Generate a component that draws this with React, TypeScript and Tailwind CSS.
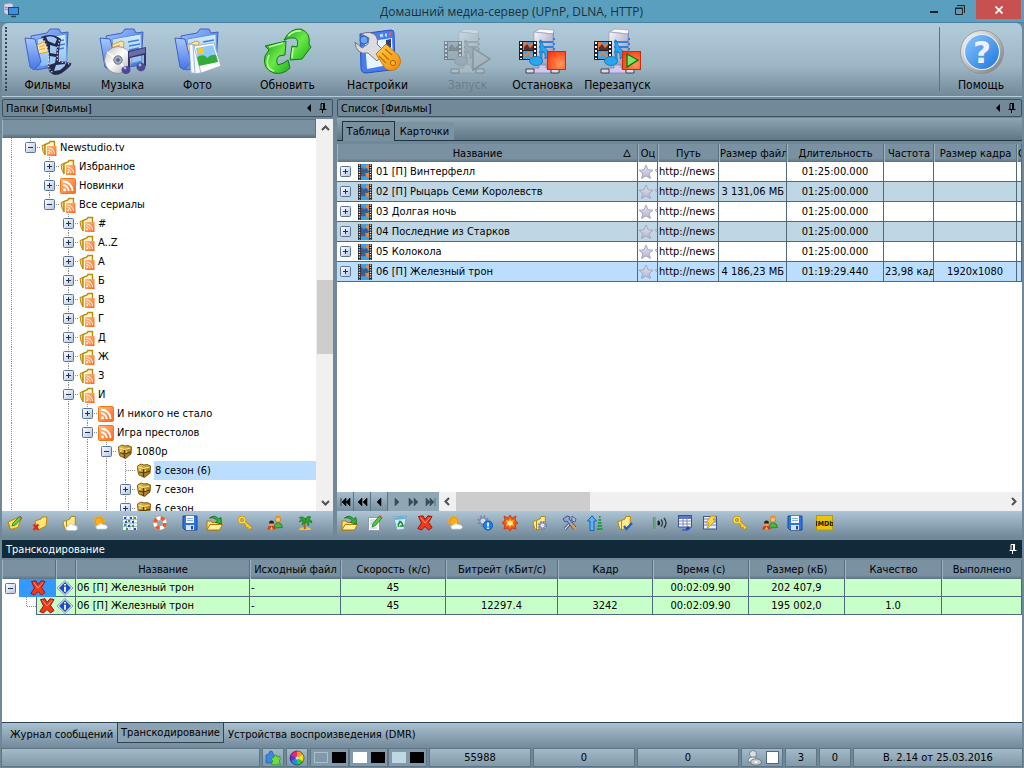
import React from 'react';

type IconProps = { className?: string };

const tahoma = "font-['DejaVu_Sans_Condensed','DejaVu_Sans',sans-serif]";

/* ---------- shared gradients ---------- */

const Defs = () => (
  <svg width="0" height="0" className="absolute" aria-hidden="true">
    <defs>
      <linearGradient id="folderBlue" x1="0" y1="0" x2="1" y2="1">
        <stop offset="0" stopColor="#9fc0ff" />
        <stop offset="1" stopColor="#3c6ae0" />
      </linearGradient>
      <linearGradient id="flapBlue" x1="0" y1="0" x2="0" y2="1">
        <stop offset="0" stopColor="#a9c8ff" />
        <stop offset="1" stopColor="#4474e4" />
      </linearGradient>
      <linearGradient id="paperBlue" x1="0" y1="0" x2="0" y2="1">
        <stop offset="0" stopColor="#d3ecfc" />
        <stop offset="1" stopColor="#86b8f0" />
      </linearGradient>
      <linearGradient id="disc" x1="0" y1="0" x2="1" y2="1">
        <stop offset="0" stopColor="#b9b9b9" />
        <stop offset="0.45" stopColor="#ffffff" />
        <stop offset="1" stopColor="#a9a9a9" />
      </linearGradient>
      <linearGradient id="green" x1="0" y1="0" x2="1" y2="1">
        <stop offset="0" stopColor="#22a022" />
        <stop offset="0.5" stopColor="#6be848" />
        <stop offset="1" stopColor="#1cae1c" />
      </linearGradient>
      <linearGradient id="tower" x1="0" y1="0" x2="1" y2="1">
        <stop offset="0" stopColor="#f6f6fb" />
        <stop offset="1" stopColor="#8e8eb0" />
      </linearGradient>
      <radialGradient id="stopRed" cx="0.7" cy="0.7" r="0.8">
        <stop offset="0" stopColor="#ff9a5c" />
        <stop offset="1" stopColor="#ff3a12" />
      </radialGradient>
      <linearGradient id="orange" x1="0" y1="0" x2="1" y2="1">
        <stop offset="0" stopColor="#ffd04a" />
        <stop offset="1" stopColor="#f58a08" />
      </linearGradient>
      <linearGradient id="rssFill" x1="0" y1="0" x2="1" y2="1">
        <stop offset="0" stopColor="#ffc08a" />
        <stop offset="1" stopColor="#ff6418" />
      </linearGradient>
      <linearGradient id="helpBlue" x1="0" y1="0" x2="1" y2="1">
        <stop offset="0" stopColor="#8cc6ff" />
        <stop offset="1" stopColor="#1976dc" />
      </linearGradient>
      <linearGradient id="ring" x1="0" y1="0" x2="1" y2="1">
        <stop offset="0" stopColor="#ffffff" />
        <stop offset="1" stopColor="#777777" />
      </linearGradient>
      <linearGradient id="boxBlue" x1="0" y1="0" x2="1" y2="1">
        <stop offset="0" stopColor="#ffffff" />
        <stop offset="1" stopColor="#b4c4e0" />
      </linearGradient>
      <linearGradient id="starFill" x1="0" y1="0" x2="0" y2="1">
        <stop offset="0" stopColor="#e4e4ea" />
        <stop offset="1" stopColor="#b4b4dc" />
      </linearGradient>
      <linearGradient id="gold" x1="0" y1="0" x2="1" y2="1">
        <stop offset="0" stopColor="#f0cc50" />
        <stop offset="1" stopColor="#8a6010" />
      </linearGradient>
    </defs>
  </svg>
);

/* ---------- large toolbar icons, 48x48 ---------- */

const FolderBase = () => (
  <>
    <path d="M7 9 23 6 26 2h9l2 4 7-1-2 33-30 5Z" fill="url(#folderBlue)" stroke="#3d62c4" />
    <path d="M13 12 42 7l1 27-27 6Z" fill="url(#paperBlue)" stroke="#5f93dc" />
    <path d="M29 15l11-2M30 19l11-2M30 23l10-2" stroke="#3f83d8" strokeWidth="1.400" />
    <path d="M13 18l9-4 3 1-1 10-11 2Z" fill="#ffe3a0" stroke="#e0a030" />
    <path d="M15 20l6-2M15 23l6-2" stroke="#e8a83c" />
    <path d="M1 11 11 12 17 35 10 43 6 40Z" fill="url(#flapBlue)" stroke="#3d62c4" />
  </>
);

const FilmsIcon = () => (
  <svg width="48" height="48" viewBox="0 0 48 48">
    <FolderBase />
    <path d="M17 10q11-5 20 2-3 14-2 22l12 2q2 2-9 10-3 2-7 2-9-2-6-14 1-13-8-24Z" fill="#26284a" />
    <path d="M22 10q7-2 11 2l-2 5-7-3ZM26 18l7 2-1 7-6-1ZM26 29l6 1-1 6-6 2ZM32 38l9-1q2 1-5 6l-6 1Z" fill="#9cc8f2" />
    <path d="M18.500 11q7 9 6 24-1 7 5 11" fill="none" stroke="#d4dcf4" strokeWidth="1.200" strokeDasharray="1.400 1.800" />
    <path d="M35.500 13q-3 10-2 21l12 3" fill="none" stroke="#d4dcf4" strokeWidth="1.200" strokeDasharray="1.400 1.800" />
  </svg>
);

const MusicIcon = () => (
  <svg width="48" height="48" viewBox="0 0 48 48">
    <FolderBase />
    <circle cx="19" cy="33" r="13.500" fill="url(#disc)" stroke="#888" strokeWidth="0.800" />
    <path d="M19 33 8 25M19 33l9-10M19 33l8 10" stroke="#fff" strokeWidth="2" opacity="0.700" />
    <circle cx="19" cy="33" r="4.200" fill="#a4adb8" stroke="#6d7884" />
    <circle cx="19" cy="33" r="1.800" fill="#3f6898" />
    <path d="M29 24l18-4v19h-2V28l-14 3v12h-2Z" fill="#34346c" />
    <path d="M30 25l16-4v5l-16 4Z" fill="#6c6ca8" />
    <ellipse cx="27" cy="43" rx="4.500" ry="4" fill="#4a4a94" />
    <ellipse cx="42" cy="40" rx="4.500" ry="4.200" fill="#4a4a94" />
    <circle cx="26" cy="41" r="1.400" fill="#b4b4e4" />
    <circle cx="41" cy="38" r="1.400" fill="#b4b4e4" />
  </svg>
);

const PhotoIcon = () => (
  <svg width="48" height="48" viewBox="0 0 48 48">
    <FolderBase />
    <path d="M15 17l13 2-1 28-10-1Z" fill="#f4f8fe" stroke="#8aa4cc" strokeWidth="0.800" />
    <path d="M19 18l10 2 2 25-10 2Z" fill="#f4f8fe" stroke="#8aa4cc" strokeWidth="0.800" />
    <path d="M20 19l20-3 7 23-20 7Z" fill="#fff" stroke="#9ab" strokeWidth="0.800" />
    <path d="M22 21l17-3 5 16-19 4Z" fill="#8ecbfb" />
    <path d="M23 30q8-4 10 1 4-4 9-3l2 7-19 4Z" fill="#35ac38" />
    <circle cx="27" cy="24" r="3" fill="#ffcc10" />
  </svg>
);

const RefreshBig = () => (
  <svg width="48" height="48" viewBox="0 0 48 48">
    <path d="M20 13Q26 1 37 2q10 4 8 15l2 3-9 12-12 1 2-14 5 1q2-7-2-9-5-1-11 2Z" fill="url(#green)" stroke="#0b7d10" />
    <path d="M24 9q6-6 13-5M29 21l-1 10" stroke="#b8ff9c" strokeWidth="1.600" fill="none" />
    <path d="M1 19 22 14l-1 14-6 1q-4 4-1 9 5-1 10-5l2 8q-7 7-16 5Q-2 42 1 29l4-6Z" fill="url(#green)" stroke="#0b7d10" />
    <path d="M5 20l14-4M5 28q-5 13 5 16" stroke="#b8ff9c" strokeWidth="1.600" fill="none" />
  </svg>
);

const SettingsBig = () => (
  <svg width="48" height="48" viewBox="0 0 48 48">
    <path d="M6 7l31-4q3 0 3 3l1 33q0 3-4 4l-25 3q-5 0-5-5Z" fill="#477df0" stroke="#2b4fba" />
    <path d="M11 15l27-4 1 26-26 5Z" fill="#e8f4ff" />
    <path d="M26 9l3-1M31 8h2" stroke="#bcdcff" strokeWidth="3" />
    <path d="M35 7h2" stroke="#ff6040" strokeWidth="3" />
    <path d="M32 13l5-1v9l-5-3Z" fill="#28408c" />
    <path d="M7 7q10-4 15 2 3 5 1 8l8 8-8 9-9-8Q2 28 1 15l7 6 6-4 1-6Z" fill="#dcdce0" stroke="#75767e" />
    <circle cx="10" cy="13" r="4" fill="#6ba4f8" stroke="#2b5fc4" />
    <path d="M22 27 32 17 45 29q4 8-3 13-7 3-11-1Z" fill="url(#orange)" stroke="#c87800" />
    <path d="M28 26l7 7M25 29l7 7M31 22l7 6" stroke="#c07400" strokeWidth="1.400" />
    <circle cx="39" cy="36" r="2.600" fill="#ffb628" stroke="#a86400" />
  </svg>
);

const ServerBase = () => (
  <>
    <path d="M15 5 24 2l11 1v35l-20-1Z" fill="url(#tower)" />
    <path d="M15 5 21 2l14 1-1 4Z" fill="#fafafc" stroke="#9a9ab4" strokeWidth="0.700" />
    <path d="M15 5l19 2v31l-19-2Z" fill="url(#tower)" stroke="#9a9ab4" strokeWidth="0.700" />
    <path d="M20 15h14M20 20h14M20 25h14" stroke="#2f80e0" strokeWidth="2" />
    <rect x="0" y="14" width="18" height="19" fill="#20222a" />
    <path d="M2 15v17M16 15v17" stroke="#fff" strokeWidth="2" strokeDasharray="2 2" />
    <rect x="4" y="15" width="10" height="8" fill="#4b9ad8" />
    <rect x="4" y="24" width="10" height="8" fill="#43a4e8" />
    <path d="M4 15h3l3 3 4-2v7H4Z" fill="#e8783c" />
    <path d="M5 20l3-3 3 4 3-3v5H5Z" fill="#5c3030" />
    <path d="M5 29l4-3 5 4" stroke="#f08038" fill="none" strokeWidth="2" />
    <path d="M22 13q1 6 8 12-1 6-4 7 1-6-3-8v12h-2V13Z" fill="#28a8ec" stroke="#1470b8" strokeWidth="0.800" />
    <ellipse cx="17" cy="34" rx="6.500" ry="4.500" fill="#28a8ec" stroke="#1470b8" strokeWidth="0.800" />
    <path d="M20 38h7v3h5v5H14v-5h6Z" fill="#d0c8f0" stroke="#807ca0" strokeWidth="0.700" />
    <path d="M7 42h8v4H7ZM32 42h8v4h-8Z" fill="#dcdce8" stroke="#404050" />
  </>
);

const TowerSide = () => (
  <>
    <path d="M34 7 35 3v33l-1 2Z" fill="#8c8cac" />
    <path d="M34 12h2M34 17h2M34 22h2" stroke="#2f80e0" strokeWidth="2" />
  </>
);

const ServerStart = () => (
  <svg width="48" height="48" viewBox="0 0 48 48" className="opacity-35 grayscale">
    <ServerBase />
    <TowerSide />
    <path d="M29 21 46 32 29 43Z" fill="#b4b4b4" stroke="#555" strokeWidth="1.500" />
  </svg>
);

const ServerStop = () => (
  <svg width="48" height="48" viewBox="0 0 48 48">
    <ServerBase />
    <TowerSide />
    <rect x="28.500" y="24.500" width="18" height="18" fill="url(#stopRed)" stroke="#c82a0c" />
  </svg>
);

const ServerRestart = () => (
  <svg width="48" height="48" viewBox="0 0 48 48">
    <ServerBase />
    <TowerSide />
    <rect x="28.500" y="24.500" width="18" height="18" fill="url(#stopRed)" stroke="#c82a0c" />
    <path d="M33 27l11 6-11 7Z" fill="#7de868" stroke="#0b7010" strokeWidth="1.300" />
  </svg>
);

const HelpBig = () => (
  <svg width="48" height="48" viewBox="0 0 48 48">
    <circle cx="25" cy="25" r="21.500" fill="url(#ring)" stroke="#8a8a8a" strokeWidth="0.700" />
    <circle cx="25" cy="25" r="17.500" fill="url(#helpBlue)" stroke="#e8eef4" strokeWidth="1.200" />
    <text x="25" y="36" textAnchor="middle" fontFamily="DejaVu Sans" fontWeight="700" fontSize="31" fill="#f0f0fc">?</text>
  </svg>
);

/* ---------- small icons, 16x16 ---------- */

const Rss = ({ className }: IconProps) => (
  <svg width="16" height="16" viewBox="0 0 16 16" className={className}>
    <rect x="0.500" y="0.500" width="15" height="15" rx="1" fill="url(#rssFill)" stroke="#f07818" />
    <circle cx="4.500" cy="11.700" r="1.500" fill="#fff" />
    <path d="M3 7.300a5.700 5.700 0 0 1 5.700 5.700M3 3.500a9.500 9.500 0 0 1 9.500 9.500" fill="none" stroke="#fff" strokeWidth="1.900" />
  </svg>
);

const RssFolder = () => (
  <svg width="16" height="16" viewBox="0 0 16 16">
    <path d="M1 5.500 4 4.500v10.500Q1.500 12 1 5.500Z" fill="#f4d880" stroke="#b88a10" />
    <path d="M4 15V4.500l4-1.500 1-1.500h4.500V7" fill="#fff6cc" stroke="#b88a10" strokeWidth="1.400" />
    <rect x="6" y="6" width="9.500" height="10" fill="url(#rssFill)" />
    <circle cx="8.200" cy="13.300" r="1" fill="#fff" />
    <path d="M7.300 10.500a3.800 3.800 0 0 1 3.800 3.800M7.300 8a6.300 6.300 0 0 1 6.300 6.300" fill="none" stroke="#ffe8d8" strokeWidth="1.100" />
  </svg>
);

const Shield = () => (
  <svg width="16" height="16" viewBox="0 0 16 16">
    <path d="M1.500 3 5 1l3 1 3-.5L14.500 3l-.5 7-5.500 4.500L3 12Q1.500 9 1.500 3Z" fill="url(#gold)" stroke="#74500a" strokeWidth="0.900" />
    <path d="M2.500 4 7 5.500 13.500 4" fill="none" stroke="#ffe680" strokeWidth="1.200" />
    <path d="M7.500 6v8M3 9l4.500 1L14 8" fill="none" stroke="#54380a" strokeWidth="1.200" />
    <path d="M4 6v2M9.500 7v1.500" stroke="#ffe680" strokeWidth="1.200" />
  </svg>
);

const FilmStrip = () => (
  <svg width="14" height="16" viewBox="0 0 14 16">
    <rect width="14" height="16" fill="#23252c" />
    <path d="M1.500 .5v15M12.500 .5v15" stroke="#e8e8e8" strokeWidth="1.400" strokeDasharray="1.200 1.200" />
    <rect x="3" width="8" height="7.500" fill="#3fa0e0" />
    <rect x="3" y="8.500" width="8" height="7.500" fill="#3fa0e0" />
    <path d="M8 2l3-2v6L8 4ZM8 10l3-2v6l-3-2Z" fill="#ec8a38" />
    <path d="M3 3l3 2 3-1 1 3H3ZM3 8.500h3l2 3-3 1-2-1Z" fill="#2c5c9c" />
    <path d="M4 5h2M4 11h2" stroke="#c04848" strokeWidth="1.200" />
  </svg>
);

const Star = () => (
  <svg width="19" height="16" viewBox="0 0 19 16">
    <path d="M8 1l2 4.700 5 .5-3.800 3.300 1.300 5L8 12l-4.500 2.500 1.300-5L1 6.200l5-.5Z" fill="url(#starFill)" stroke="#9a9ab0" strokeWidth="0.800" />
    <path d="M19 5l-2 1 2 2" fill="#c8c8d8" stroke="#a4a4b8" strokeWidth="0.800" />
  </svg>
);

const Cross = ({ className }: IconProps) => (
  <svg width="16" height="16" viewBox="0 0 16 16" className={className}>
    <path d="M1.500 1.500 6 .800l2 3.700L11 .800l4 .7-3.500 6L15 12.500 11.500 15 8 11.500 4.500 15 .8 13.500 4.500 8Z" fill="#f03a1c" stroke="#a01208" />
    <path d="M3.500 2.500 8 8l5-5.500" stroke="#ff9a78" fill="none" />
  </svg>
);

const Info = () => (
  <svg width="18" height="16" viewBox="0 0 18 16">
    <path d="M9 .500 17 8l-8 7.500L1 8Z" fill="#e8ecf4" stroke="#8c98b0" />
    <path d="M9 2 15 8l-6 6-6-6Z" fill="#1a50c0" />
    <path d="M9 4v1.500M9 6.700v5" stroke="#fff" strokeWidth="1.800" />
  </svg>
);

const FolderShape = () => (
  <>
    <path d="M4.500 15V5.500L8 4l1-2.500h4.500L13 11Z" fill="#ffe98c" stroke="#b8860c" />
    <path d="M.8 6.500l3.700-1V15L2.500 13Z" fill="#fff0a0" stroke="#b8860c" />
  </>
);

const FolderEdit = () => (
  <svg width="16" height="16" viewBox="0 0 16 16">
    <path d="M1 7l9-4 4 .5-3 9-8 2Z" fill="#ffe060" stroke="#b8860c" />
    <path d="M1 7l2.500 7.500" stroke="#b8860c" />
    <path d="M5 11l1-3 7-7 2 2-6.500 7Z" fill="#5cd44c" stroke="#1f7a1c" strokeWidth="0.800" />
    <path d="M12.500 1.500l2 2" stroke="#e04838" strokeWidth="1.500" />
  </svg>
);

const FolderDelete = () => (
  <svg width="16" height="16" viewBox="0 0 16 16">
    <path d="M3 6 9 4l1-2h5l-1 9-8 4Z" fill="#ffe478" stroke="#b8860c" />
    <path d="M1.500 9.500l5 5.500M6.500 9.500l-5 5.500" stroke="#e02818" strokeWidth="2.200" />
  </svg>
);

const FolderCloud = () => (
  <svg width="16" height="16" viewBox="0 0 16 16">
    <FolderShape />
    <path d="M5 15.500q-3-3 1-4.500 2-4 5-1 4-.500 4.500 3 0 2-2 2.500Z" fill="#fff" stroke="#b4bcc4" strokeWidth="0.800" />
  </svg>
);

const Weather = () => (
  <svg width="16" height="16" viewBox="0 0 16 16">
    <circle cx="7" cy="6.500" r="5.300" fill="none" stroke="#f8b020" strokeWidth="1.400" strokeDasharray="1.400 1.370" />
    <circle cx="7" cy="6.500" r="4" fill="#ffb010" stroke="#f49008" />
    <path d="M5 14q-2.500-3 1.500-4.200 2.500-2.600 4.500 0 4-.400 4.300 2.300-.3 1.900-2 1.900Z" fill="#fff" stroke="#c8d0d8" strokeWidth="0.800" />
  </svg>
);

const GridDots = () => (
  <svg width="16" height="16" viewBox="0 0 16 16">
    <rect x="1" y="1" width="14" height="14" fill="#eef2f8" />
    <path d="M1 4.500h14M1 8h14M1 11.500h14M4.500 1v14M8 1v14M11.500 1v14" stroke="#8aa4bc" strokeWidth="0.700" />
    <path d="M2 3h2M8 3h2M3 7h2M10 7h2M6 11h2M12 14h2" stroke="#2850c0" strokeWidth="2" />
    <path d="M12 3h2M6 6h2M2 10h2M10 11h2M4 14h2" stroke="#30a040" strokeWidth="2" />
  </svg>
);

const Lifebuoy = () => (
  <svg width="16" height="16" viewBox="0 0 16 16">
    <circle cx="8" cy="8" r="5" fill="none" stroke="#fff" strokeWidth="4" />
    <circle cx="8" cy="8" r="5" fill="none" stroke="#f0582c" strokeWidth="4" strokeDasharray="3.930 3.930" />
    <circle cx="8" cy="8" r="7.200" fill="none" stroke="#a09890" strokeWidth="0.600" />
  </svg>
);

const Floppy = () => (
  <svg width="16" height="16" viewBox="0 0 16 16">
    <path d="M1 1h14v14H3l-2-2Z" fill="#2c74e0" stroke="#1848a0" />
    <rect x="4" y="1" width="8" height="7" fill="#f4f8fc" />
    <path d="M5 3.500h6M5 5.500h6" stroke="#8cb0d8" />
    <rect x="4" y="10" width="8" height="5" fill="#d8e4f0" />
    <rect x="9" y="11" width="2" height="3.500" fill="#204c98" />
  </svg>
);

const FolderImport = () => (
  <svg width="18" height="16" viewBox="0 0 18 16">
    <path d="M1 15V6h4l1 1.500h7V15Z" fill="#ffe070" stroke="#b47808" />
    <path d="M1 15l3-5.500h12.500L13.500 15Z" fill="#fff0a0" stroke="#b47808" />
    <path d="M3.500 3Q9-1 12.500 4L15 2.500 15.500 9 9.500 7.500 11 5.500Q8.500 2 3.500 3Z" fill="#34b434" stroke="#0c6c14" strokeWidth="0.800" />
  </svg>
);

const Key = () => (
  <svg width="16" height="16" viewBox="0 0 16 16">
    <circle cx="5" cy="5" r="2.800" fill="none" stroke="#c08c04" strokeWidth="3" />
    <path d="M7 7l7.500 6.500M11 10l-2 2.500M13 12l-1.500 2" stroke="#c08c04" strokeWidth="3" />
    <circle cx="5" cy="5" r="2.800" fill="none" stroke="#ffd83c" strokeWidth="1.600" />
    <path d="M7 7l7 6M11 10l-1.500 2M13 12l-1 1.500" stroke="#ffd83c" strokeWidth="1.600" />
  </svg>
);

const Users = () => (
  <svg width="16" height="16" viewBox="0 0 16 16">
    <path d="M7.500 13q-.500-5 3.500-5.500 4 .500 4.500 5Z" fill="#48b83c" stroke="#206c1c" strokeWidth="0.700" />
    <circle cx="11" cy="4.500" r="2.800" fill="#f8c070" stroke="#b06818" strokeWidth="0.700" />
    <path d="M8 4q0-3.500 3-3.500t3 3l-3-1Z" fill="#f09018" />
    <path d="M.500 14.500q0-4 4-4t4 4Z" fill="#d83820" />
    <circle cx="4.500" cy="8.800" r="2.400" fill="#e8a048" />
    <path d="M2 8.500q0-3 2.500-3T7 8.500Z" fill="#282020" />
    <path d="M3 14.500l1.500-3 1.500 3Z" fill="#ffd020" />
  </svg>
);

const Palm = () => (
  <svg width="16" height="16" viewBox="0 0 16 16">
    <path d="M2 15q0-3 6-3t6 3Z" fill="#f4c040" />
    <path d="M9 4Q6.500 8 8 14" stroke="#a86418" strokeWidth="2" fill="none" />
    <path d="M9 5Q6 0 2 3h3L2 7q3-1 4-2l-1 5q3-2 3.500-4l3 5q1-3-.500-5l4 2q0-3-3-4l2-2q-3-2-6 2Z" fill="#2ca428" stroke="#14701c" strokeWidth="0.600" />
  </svg>
);

const Edit = () => (
  <svg width="16" height="16" viewBox="0 0 16 16">
    <rect x="1.500" y="2.500" width="11" height="13" fill="#fff" stroke="#909cac" />
    <path d="M3 5h7M3 7h5M3 9h4M3 13h7" stroke="#b4c0d0" />
    <path d="M5 12l1-3.500L12.500 1l2.500 2-6.500 7.500Z" fill="#4ecc40" stroke="#187420" strokeWidth="0.800" />
    <path d="M12.500 1l2.500 2" stroke="#e84838" strokeWidth="2" />
  </svg>
);

const Recycle = () => (
  <svg width="16" height="16" viewBox="0 0 16 16">
    <path d="M1.500 2l13-1-2.500 13.500-7 .500Z" fill="#d4ecfa" stroke="#78a0bc" strokeWidth="0.900" />
    <path d="M2 2.500l12-1-.5 2.500L3 5Z" fill="#58b8ec" />
    <path d="M6 10l2-3.500L10 8M10 8l1 3H8M6 10l1 2" fill="none" stroke="#20902c" strokeWidth="1.600" />
  </svg>
);

const GearInfo = () => (
  <svg width="16" height="16" viewBox="0 0 16 16">
    <circle cx="6" cy="6" r="4.800" fill="none" stroke="#7c88ac" strokeWidth="2" strokeDasharray="2 1.770" />
    <circle cx="6" cy="6" r="3.200" fill="#d0d8e8" stroke="#7c88ac" strokeWidth="1.300" />
    <circle cx="11" cy="10.500" r="4.700" fill="#1880e8" stroke="#0c50a8" strokeWidth="0.800" />
    <path d="M11 7.500v4M11 12.500v1.500" stroke="#fff" strokeWidth="1.700" />
  </svg>
);

const Burst = () => (
  <svg width="16" height="16" viewBox="0 0 16 16">
    <path d="M8 0l2 3 4-2-1 4 3 3-3 2 1 4-4-1-2 3-2-3-4 1 1-4-3-2 3-3-1-4 4 2Z" fill="#f05c18" stroke="#d02c10" strokeWidth="0.800" />
    <path d="M8 3l1 3 3-1-1 3 1 3-3-1-1 3-1-3-3 1 1-3-1-3 3 1Z" fill="#ffc030" />
    <circle cx="8" cy="8" r="2.500" fill="#ffe890" />
  </svg>
);

const FolderGear = () => (
  <svg width="16" height="16" viewBox="0 0 16 16">
    <FolderShape />
    <circle cx="10.500" cy="10.500" r="3.600" fill="#e8ecf4" stroke="#7480a4" strokeWidth="2" strokeDasharray="1.800 1.030" />
    <circle cx="10.500" cy="10.500" r="2.600" fill="#dce4f0" stroke="#7480a4" />
  </svg>
);

const Tools = () => (
  <svg width="16" height="16" viewBox="0 0 16 16">
    <path d="M3 14 12 4" stroke="#3c5088" strokeWidth="3" />
    <path d="M3 14 12 4" stroke="#c8d8f4" strokeWidth="1.200" />
    <path d="M10 1l4 3-1 3-3-1Z" fill="#b0bcd8" stroke="#3c5088" strokeWidth="0.800" />
    <path d="M1 4l4-3 3 1-1 2 7 8-2.500 2.500L5 6 3 7Z" fill="#90a8dc" stroke="#2c3c70" strokeWidth="0.800" />
    <path d="M9 9l5 5" stroke="#e8a030" strokeWidth="2" />
  </svg>
);

const SortUp = () => (
  <svg width="16" height="16" viewBox="0 0 16 16">
    <path d="M5 .800 9.500 6H7v9.500H3V6H.500Z" fill="#58b4f4" stroke="#1860b8" />
    <path d="M12 2h1.500M11.500 5h2.500M11 8h3.500M10.500 11h4.500M10 14h5.500" stroke="#20a038" strokeWidth="1.800" />
  </svg>
);

const FolderCheck = () => (
  <svg width="16" height="16" viewBox="0 0 16 16">
    <FolderShape />
    <path d="M7 11l2.500 3L15 8" stroke="#1a60d0" strokeWidth="2.400" fill="none" />
  </svg>
);

const Sound = () => (
  <svg width="16" height="16" viewBox="0 0 16 16">
    <path d="M1.500 2v12" stroke="#d85c50" strokeWidth="1.200" />
    <path d="M3 2v12" stroke="#40b060" strokeWidth="1.200" />
    <path d="M6 6q2 2 0 4" fill="none" stroke="#181c20" strokeWidth="2.200" />
    <path d="M9 4.500q3 3.500 0 7M12 3q4 5 0 10" fill="none" stroke="#303840" strokeWidth="1.300" />
  </svg>
);

const TableIcon = () => (
  <svg width="16" height="16" viewBox="0 0 16 16">
    <rect x="1.500" y=".500" width="13" height="11.500" fill="#fff" stroke="#3c5494" />
    <path d="M2 2.500h12" stroke="#5c78c0" strokeWidth="3" />
    <path d="M2 6h12M2 9h12M6 3v9M10 3v9" stroke="#7888b8" />
    <path d="M5 15h6v-3M9 14l2-2 2 2" stroke="#1840c0" fill="none" strokeWidth="1.200" />
  </svg>
);

const TableBolt = () => (
  <svg width="16" height="16" viewBox="0 0 16 16">
    <rect x="1.500" y="1.500" width="13" height="12.500" fill="#e8eef8" stroke="#3c5494" />
    <path d="M2 4h12M2 7h12M2 10h12" stroke="#6c80b0" />
    <path d="M9 1h5l-3 4h3L5 14l2-6H4Z" fill="#ffd840" stroke="#c08008" strokeWidth="0.700" />
  </svg>
);

const Imdb = () => (
  <svg width="17" height="16" viewBox="0 0 17 16">
    <rect x=".500" y=".500" width="16" height="14.500" fill="#e8c410" stroke="#b89808" />
    <text x="8.500" y="11" textAnchor="middle" fontFamily="Liberation Sans Narrow, DejaVu Sans Condensed" fontWeight="700" fontSize="7" fill="#181400">IMDb</text>
  </svg>
);

const Puzzle = () => (
  <svg width="16" height="16" viewBox="0 0 16 16">
    <path d="M1 13V5l3-1q0-3 2-3t2 3l1 1v8Z" fill="#3c88e0" stroke="#2058a8" strokeWidth="0.700" />
    <path d="M6 14l2-3-2-2 3-2q0-3 2.500-2l.500 2 3-1v4l-1 1 1.500 4-3-1-2 1Z" fill="#70dc40" stroke="#2c9020" strokeWidth="0.700" />
  </svg>
);

const ColorWheel = () => (
  <svg width="16" height="16" viewBox="0 0 16 16">
    <path d="M8 8V1a7 7 0 0 1 6.060 3.500Z" fill="#ff9818" />
    <path d="M8 8l6.060-3.500a7 7 0 0 1 0 7Z" fill="#e8e020" />
    <path d="M8 8l6.060 3.500A7 7 0 0 1 8 15Z" fill="#38c828" />
    <path d="M8 8v7a7 7 0 0 1-6.060-3.500Z" fill="#1890e0" />
    <path d="M8 8l-6.060 3.500a7 7 0 0 1 0-7Z" fill="#5830e0" />
    <path d="M8 8 1.940 4.500A7 7 0 0 1 8 1Z" fill="#f02070" />
    <circle cx="8" cy="8" r="1.500" fill="#fff" opacity="0.700" />
    <circle cx="8" cy="8" r="7" fill="none" stroke="#20242c" strokeWidth="0.600" />
  </svg>
);

const UserDisk = () => (
  <svg width="16" height="16" viewBox="0 0 16 16">
    <circle cx="7" cy="4" r="3.500" fill="#dce0e4" stroke="#687480" strokeWidth="0.800" />
    <path d="M2 12q0-5 5-5t5 5Z" fill="#e8ecf0" stroke="#687480" strokeWidth="0.800" />
    <ellipse cx="10" cy="12" rx="5.500" ry="3.200" fill="#c8ccd0" stroke="#606a74" strokeWidth="0.800" />
    <ellipse cx="10" cy="12" rx="1.500" ry="1" fill="#fff" />
  </svg>
);

const Pin = () => (
  <svg width="8" height="10" viewBox="0 0 8 10" fill="none" stroke="currentColor">
    <path d="M2 6V.500h3.500V6M.500 6.500h7M3.500 7v3" />
    <path d="M5 0v6" strokeWidth="2" />
  </svg>
);

const AppIcon = () => (
  <svg width="16" height="16" viewBox="0 0 16 16">
    <path d="M1 1l6-1 3 1v10l-5 1-4-2Z" fill="#d4d4ec" stroke="#8888b0" strokeWidth="0.700" />
    <path d="M2 4l3 1M2 6l3 1" stroke="#e06070" />
    <rect x="5.500" y="4.500" width="10" height="7" fill="#3890e8" stroke="#20486c" />
    <path d="M8 13.500h5" stroke="#30404c" strokeWidth="1.500" />
  </svg>
);

const Chevron = ({ d }: { d: string }) => (
  <svg width="9" height="9" viewBox="0 0 9 9" fill="none" stroke="#505050" strokeWidth="2">
    <path d={d} />
  </svg>
);

/* ---------- data ---------- */

const tools = [
  { name: 'Фильмы', icon: <FilmsIcon />, gap: false },
  { name: 'Музыка', icon: <MusicIcon />, gap: false },
  { name: 'Фото', icon: <PhotoIcon />, gap: false },
  { name: 'Обновить', icon: <RefreshBig />, gap: true },
  { name: 'Настройки', icon: <SettingsBig />, gap: true },
  { name: 'Запуск', icon: <ServerStart />, gap: true, disabled: true },
  { name: 'Остановка', icon: <ServerStop />, gap: false },
  { name: 'Перезапуск', icon: <ServerRestart />, gap: false },
];

type Node = { level: number; box?: '+' | '-'; icon: 'folder' | 'rss' | 'shield'; text: string; last?: boolean; selected?: boolean };

const tree: Node[] = [
  { level: 1, box: '-', icon: 'folder', text: 'Newstudio.tv', last: true },
  { level: 2, box: '+', icon: 'folder', text: 'Избранное' },
  { level: 2, box: '+', icon: 'rss', text: 'Новинки' },
  { level: 2, box: '-', icon: 'folder', text: 'Все сериалы', last: true },
  { level: 3, box: '+', icon: 'folder', text: '#' },
  { level: 3, box: '+', icon: 'folder', text: 'A..Z' },
  { level: 3, box: '+', icon: 'folder', text: 'А' },
  { level: 3, box: '+', icon: 'folder', text: 'Б' },
  { level: 3, box: '+', icon: 'folder', text: 'В' },
  { level: 3, box: '+', icon: 'folder', text: 'Г' },
  { level: 3, box: '+', icon: 'folder', text: 'Д' },
  { level: 3, box: '+', icon: 'folder', text: 'Ж' },
  { level: 3, box: '+', icon: 'folder', text: 'З' },
  { level: 3, box: '-', icon: 'folder', text: 'И' },
  { level: 4, box: '+', icon: 'rss', text: 'И никого не стало' },
  { level: 4, box: '-', icon: 'rss', text: 'Игра престолов' },
  { level: 5, box: '-', icon: 'shield', text: '1080p' },
  { level: 6, icon: 'shield', text: '8 сезон (6)', selected: true },
  { level: 6, box: '+', icon: 'shield', text: '7 сезон' },
  { level: 6, box: '+', icon: 'shield', text: '6 сезон' },
];

// tree columns whose branch goes on below the visible part
const openBranches = [0, 3, 4, 5];

const files = [
  { name: '01 [П] Винтерфелл', size: '', time: '01:25:00.000', rate: '', frame: '' },
  { name: '02 [П] Рыцарь Семи Королевств', size: '3 131,06 МБ', time: '01:25:00.000', rate: '', frame: '' },
  { name: '03 Долгая ночь', size: '', time: '01:25:00.000', rate: '', frame: '' },
  { name: '04 Последние из Старков', size: '', time: '01:25:00.000', rate: '', frame: '' },
  { name: '05 Колокола', size: '', time: '01:25:00.000', rate: '', frame: '' },
  { name: '06 [П] Железный трон', size: '4 186,23 МБ', time: '01:19:29.440', rate: '23,98 кад', frame: '1920x1080' },
];

const jobs = [
  ['06 [П] Железный трон', '-', '45', '', '', '00:02:09.90', '202 407,9', '', ''],
  ['06 [П] Железный трон', '-', '45', '12297.4', '3242', '00:02:09.90', '195 002,0', '1.0', ''],
];

const jobHeads = ['', '', 'Название', 'Исходный файл', 'Скорость (к/с)', 'Битрейт (кБит/с)', 'Кадр', 'Время (с)', 'Размер (кБ)', 'Качество', 'Выполнено'];

const folderActions = [
  { name: 'Изменить папку', icon: <FolderEdit />, gap: false },
  { name: 'Удалить папку', icon: <FolderDelete />, gap: false },
  { name: 'Облачная папка', icon: <FolderCloud />, gap: true },
  { name: 'Погода', icon: <Weather />, gap: true },
  { name: 'Сетка', icon: <GridDots />, gap: true },
  { name: 'Восстановить', icon: <Lifebuoy />, gap: true },
  { name: 'Сохранить', icon: <Floppy />, gap: true },
  { name: 'Загрузить', icon: <FolderImport />, gap: false },
  { name: 'Доступ', icon: <Key />, gap: true },
  { name: 'Пользователи', icon: <Users />, gap: true },
  { name: 'Отдых', icon: <Palm />, gap: true },
];

const fileActions = [
  { name: 'Добавить', icon: <FolderImport />, gap: false },
  { name: 'Изменить', icon: <Edit />, gap: false },
  { name: 'Корзина', icon: <Recycle />, gap: false },
  { name: 'Удалить', icon: <Cross />, gap: false },
  { name: 'Погода', icon: <Weather />, gap: true },
  { name: 'Сведения', icon: <GearInfo />, gap: true },
  { name: 'Новое', icon: <Burst />, gap: false },
  { name: 'Параметры папки', icon: <FolderGear />, gap: true },
  { name: 'Инструменты', icon: <Tools />, gap: true },
  { name: 'Порядок', icon: <SortUp />, gap: false },
  { name: 'Отметить', icon: <FolderCheck />, gap: true },
  { name: 'Звук', icon: <Sound />, gap: true, wide: true },
  { name: 'Таблица', icon: <TableIcon />, gap: false },
  { name: 'Быстрая таблица', icon: <TableBolt />, gap: false },
  { name: 'Доступ', icon: <Key />, gap: true },
  { name: 'Пользователи', icon: <Users />, gap: true },
  { name: 'Сохранить', icon: <Floppy />, gap: false },
  { name: 'IMDb', icon: <Imdb />, gap: true },
];

const navPaths = [
  'M1 1v8M6 1 2 5l4 4ZM10 1 6 5l4 4Z',
  'M5 1 1 5l4 4ZM10 1 6 5l4 4Z',
  'M7 1 3 5l4 4Z',
  'M4 1l4 4-4 4Z',
  'M1 1l4 4-4 4ZM6 1l4 4-4 4Z',
  'M1 1l4 4-4 4ZM5 1l4 4-4 4ZM10 1v8',
];
const navNames = ['В начало', 'Страница назад', 'Назад', 'Вперёд', 'Страница вперёд', 'В конец'];

/* ---------- pieces ---------- */

const Expander = ({ open }: { open: boolean }) => (
  <svg width="11" height="11" viewBox="0 0 11 11">
    <rect x=".500" y=".500" width="10" height="10" rx="1" fill="url(#boxBlue)" stroke="#5c7498" />
    <path d={open ? 'M3 5.500h5' : 'M3 5.500h5M5.500 3v5'} stroke="#1c3450" />
  </svg>
);

const Branch = ({ up, down, right }: { up?: boolean; down?: boolean; right?: boolean }) => (
  <svg width="19" height="19" viewBox="0 0 19 19" stroke="#8c8c8c" strokeDasharray="1 1" className="shrink-0">
    {up && <path d="M9.500 0v10" />}
    {down && <path d="M9.500 10v9" />}
    {right && <path d="M10 9.500h9" />}
  </svg>
);

const TreeRow = ({ node }: { node: Node }) => (
  <li className="flex h-[19px] items-center">
    {Array.from({ length: node.level }, (_, c) => (
      <Branch key={c} up={openBranches.includes(c)} down={openBranches.includes(c)} />
    ))}
    <span className="relative flex shrink-0">
      <Branch up down={!node.last} right />
      {node.box && (
        <button aria-label={node.text} aria-expanded={node.box === '-'} className="absolute inset-0 flex items-center justify-center">
          <Expander open={node.box === '-'} />
        </button>
      )}
    </span>
    <span className="flex w-[19px] shrink-0 pl-px">
      {node.icon === 'folder' && <RssFolder />}
      {node.icon === 'rss' && <Rss />}
      {node.icon === 'shield' && <Shield />}
    </span>
    <span className={`flex h-full flex-1 items-center whitespace-nowrap pl-px ${node.selected ? 'bg-[#bbdeff]' : ''}`}>{node.text}</span>
  </li>
);

const PanelTitle = ({ text }: { text: string }) => (
  <header className="flex h-[18px] shrink-0 items-center rounded-xs border border-[#3b5262] bg-[#718998] pr-[5px] pl-[3px]">
    <h2 className="flex-1">{text}</h2>
    <button aria-label="Свернуть" className="mr-2">
      <svg width="5" height="8" viewBox="0 0 5 8"><path d="M5 0 1 4l4 4Z" /></svg>
    </button>
    <button aria-label="Закрепить"><Pin /></button>
  </header>
);

type Action = { name: string; icon: React.ReactNode; gap: boolean; wide?: boolean };

const ActionBar = ({ items }: { items: Action[] }) => (
  <div className="flex h-[27px] shrink-0 bg-linear-to-b from-[#adc5d4] to-[#6f8796]">
    {items.map((item) => (
      <button key={item.name} aria-label={item.name} className={`flex h-6 w-[25px] shrink-0 items-center justify-center ${item.wide ? 'ml-[10px]' : item.gap ? 'ml-[5px]' : ''}`}>
        {item.icon}
      </button>
    ))}
  </div>
);

const headCell = 'border-r border-r-[#57707f] border-l border-l-[#9db3c1] bg-linear-to-b from-[#7991a0] from-80% to-[#5b7383] p-0 text-center font-normal whitespace-nowrap overflow-hidden';
const cell = 'border-r border-b border-[#4d697b] p-0 overflow-hidden whitespace-nowrap';
const statusCell = 'flex h-[19px] items-center justify-center border border-[#5d7585] bg-linear-to-b from-[#a3bac9] to-[#8199a8]';

const Swatches = ({ first }: { first: string }) => (
  <div className="flex h-[19px] w-[39px] items-center justify-center gap-1 border border-[#5d7585] bg-[#8199a8]">
    <span className={`h-[11px] w-[14px] ${first}`} />
    <span className="h-[11px] w-[14px] bg-black" />
  </div>
);

/* ---------- window ---------- */

const TitleBar = () => (
  <header className="relative flex h-[23px] shrink-0 items-center justify-between border-b border-[#4a829d] bg-[#5aa0be] pr-5 pl-[3px] font-['Open_Sans',sans-serif] text-[12px] text-[#1e2e38]">
    <AppIcon />
    <h1 className="flex-1 text-center">Домашний медиа-сервер (UPnP, DLNA, HTTP)</h1>
    <div className="absolute right-0 top-0 flex h-[19px]">
      <button aria-label="Свернуть окно" className="flex w-7 items-center justify-center pt-1">
        <svg width="8" height="2"><rect width="8" height="2" fill="#222" /></svg>
      </button>
      <button aria-label="Восстановить окно" className="flex w-7 items-center justify-center pr-1">
        <svg width="10" height="10" viewBox="0 0 10 10" fill="none" stroke="#222">
          <path d="M.500 3.500h7v6h-7ZM0 3h8M2 .500h7.500V8" />
        </svg>
      </button>
      <button aria-label="Закрыть окно" className="mr-[3px] flex w-[45px] items-center justify-center bg-[#c75050]">
        <svg width="8" height="8" viewBox="0 0 8 8" stroke="#fff" strokeWidth="1.800"><path d="M.500.500l7 7M7.500.500l-7 7" /></svg>
      </button>
    </div>
  </header>
);

const ToolBar = () => (
  <nav className="mx-[2px] flex h-[74px] shrink-0 rounded-t-md border-b border-[#b4ccda] bg-linear-to-b from-[#b0c9d9] from-10% via-[#9cb5c4] via-60% to-[#708897] text-[12px]">
    <div className="mt-1 mr-[3px] ml-[3px] h-16 border-l-2 border-dotted border-[#30485a]" />
    {tools.map((tool) => (
      <button
        key={tool.name}
        disabled={tool.disabled}
        className={`flex w-[75px] shrink-0 flex-col items-center pt-1 ${tool.gap ? 'ml-[15px]' : ''} ${tool.disabled ? 'text-[#6c7f8c]' : ''}`}
      >
        {tool.icon}
        <span className="leading-5">{tool.name}</span>
      </button>
    ))}
    <div className="mt-1 ml-auto h-16 border-l border-[#5a7282]" />
    <button className="flex w-[82px] shrink-0 flex-col items-center pt-1">
      <HelpBig />
      <span className="leading-5">Помощь</span>
    </button>
  </nav>
);

const FoldersPanel = () => (
  <section className="flex w-[331px] shrink-0 flex-col">
    <PanelTitle text="Папки [Фильмы]" />
    <div className="mt-[2px] flex min-h-0 flex-1">
      <div className="flex min-w-0 flex-1 flex-col">
        <div className="h-[19px] shrink-0 border border-[#5a7282] border-l-[#9db3c1] bg-linear-to-b from-[#7991a0] from-80% to-[#5b7383]" />
        <ul className="min-h-0 flex-1 overflow-hidden bg-white">
          {tree.map((node, i) => <TreeRow key={i} node={node} />)}
        </ul>
      </div>
      <div className="flex w-[17px] shrink-0 flex-col bg-[#f0f0f0] pl-px">
        <button aria-label="Вверх" className="flex h-[18px] items-center justify-center"><Chevron d="M1 6l3.500-3.500L8 6" /></button>
        <div className="flex-[143]" />
        <div className="h-[74px] bg-[#cdcdcd]" />
        <div className="flex-[139]" />
        <button aria-label="Вниз" className="flex h-[18px] items-center justify-center"><Chevron d="M1 3l3.500 3.500L8 3" /></button>
      </div>
    </div>
    <ActionBar items={folderActions} />
  </section>
);

const FilesTable = () => (
  <table className="w-full table-fixed border-separate border-spacing-0">
    <colgroup>
      <col />
      <col className="w-[20px]" />
      <col className="w-[61px]" />
      <col className="w-[68px]" />
      <col className="w-[97px]" />
      <col className="w-[50px]" />
      <col className="w-[83px]" />
      <col className="w-[5px]" />
    </colgroup>
    <thead>
      <tr className="h-[18px]">
        <th className={headCell}>
          <div className="flex items-center pr-1.5">
            <span className="flex-1 pr-1.5">Название</span>
            <svg width="8" height="8" viewBox="0 0 8 8" fill="none" stroke="#111"><path d="M.700 7.500 4 .800 7.300 7.500Z" /></svg>
          </div>
        </th>
        <th className={headCell}>Оц</th>
        <th className={headCell}>Путь</th>
        <th className={headCell}>Размер файл</th>
        <th className={headCell}>Длительность</th>
        <th className={headCell}>Частота</th>
        <th className={headCell}>Размер кадра</th>
        <th className={headCell}>С</th>
      </tr>
    </thead>
    <tbody>
      {files.map((f, i) => (
        <tr key={f.name} className={`h-[20px] ${i === 5 ? 'bg-[#bbdeff]' : i % 2 ? 'bg-[#bfd7e5]' : 'bg-white'}`}>
          <td className={cell}>
            <div className="flex items-center pl-[3px]">
              <button aria-label={f.name} className="mr-[7px] flex"><Expander open={false} /></button>
              <FilmStrip />
              <span className="pl-1">{f.name}</span>
            </div>
          </td>
          <td className={cell}><Star /></td>
          <td className={cell}><div className="overflow-hidden pl-px">http://news</div></td>
          <td className={`${cell} text-right`}><div className="pr-0.5">{f.size}</div></td>
          <td className={`${cell} text-center`}>{f.time}</td>
          <td className={cell}><div className="pl-px">{f.rate}</div></td>
          <td className={`${cell} text-center`}>{f.frame}</td>
          <td className={cell} />
        </tr>
      ))}
    </tbody>
  </table>
);

const FilesPanel = () => (
  <section className="flex min-w-0 flex-1 flex-col">
    <PanelTitle text="Список [Фильмы]" />
    <div className="mt-px flex h-[23px] shrink-0 items-end border-b border-[#1c3444] bg-linear-to-b from-[#8ea5b4] to-[#5f7786] pl-[5px]">
      <button className="-mb-px h-[20px] w-[53px] border border-b-0 border-[#1c3444] bg-[#7990a0]">Таблица</button>
      <button className="h-[18px] w-[59px] bg-[#7b92a1]">Карточки</button>
    </div>
    <div className="mt-[3px] flex min-h-0 flex-1 flex-col overflow-hidden bg-white">
      <FilesTable />
    </div>
    <div className="flex h-[19px] shrink-0 bg-[#f0f0f0]">
      <div className="flex bg-[#8fa6b5]">
        {navPaths.map((d, i) => (
          <button
            key={d}
            aria-label={navNames[i]}
            disabled={i > 2}
            className={`flex w-[17px] items-center justify-center ${i < 3 ? 'border-r border-[#5a7282] bg-linear-to-b from-[#a5bdcc] to-[#7990a0]' : 'text-[#3a4a56]'}`}
          >
            <svg width="11" height="10" viewBox="0 0 11 10" fill="currentColor" stroke="currentColor" strokeWidth="0.600"><path d={d} /></svg>
          </button>
        ))}
      </div>
      <button aria-label="Влево" className="flex w-[17px] items-center justify-center"><Chevron d="M6 1 2.500 4.500 6 8" /></button>
      <div className="w-[134px] bg-[#cdcdcd]" />
      <button aria-label="Вправо" className="ml-auto flex w-[17px] items-center justify-center"><Chevron d="M3 1l3.500 3.500L3 8" /></button>
    </div>
    <ActionBar items={fileActions} />
  </section>
);

const JobsPanel = () => (
  <section className="mx-[2px] mt-[2px] flex h-[208px] shrink-0 flex-col">
    <header className="flex h-[18px] shrink-0 items-center bg-[#112a3a] pr-[5px] pl-1 text-white">
      <h2 className="flex-1">Транскодирование</h2>
      <button aria-label="Закрепить"><Pin /></button>
    </header>
    <div className="mt-[2px] flex-1 overflow-hidden bg-white">
      <table className="w-full table-fixed border-separate border-spacing-0">
        <colgroup>
          <col className="w-[54px]" />
          <col className="w-[20px]" />
          <col />
          <col className="w-[91px]" />
          <col className="w-[105px]" />
          <col className="w-[112px]" />
          <col className="w-[95px]" />
          <col className="w-[96px]" />
          <col className="w-[96px]" />
          <col className="w-[97px]" />
          <col className="w-[80px]" />
        </colgroup>
        <thead>
          <tr className="h-[19px]">
            {jobHeads.map((head, i) => <th key={i} className={headCell}>{head}</th>)}
          </tr>
        </thead>
        <tbody>
          {jobs.map((job, row) => (
            <tr key={row} className="h-[18px] bg-[#c8ffc8]">
              <td className="overflow-hidden bg-white p-0">
                {row === 0 ? (
                  <div className="flex h-[18px] items-center">
                    <button aria-label="Свернуть задание" className="mr-[3px] ml-[3px]"><Expander open /></button>
                    <span className="flex h-full flex-1 items-center justify-center bg-[#3399ff]"><Cross /></span>
                  </div>
                ) : (
                  <div className="flex h-[18px] justify-end">
                    <Branch up right />
                    <span className="flex w-[20px] items-center justify-center border-b border-l border-[#4d697b] bg-[#c8ffc8]"><Cross /></span>
                  </div>
                )}
              </td>
              <td className={cell}><Info /></td>
              {job.map((value, i) => (
                <td key={i} className={`${cell} ${i > 1 ? 'text-center' : ''}`}>
                  <div className={i > 1 ? '' : 'pl-px'}>{value}</div>
                </td>
              ))}
            </tr>
          ))}
        </tbody>
      </table>
    </div>
    <nav className="flex h-[26px] shrink-0 items-start border-t border-[#2c4454] bg-linear-to-b from-[#a9c1d0] to-[#71899a]">
      <button className="h-[22px] w-[115px] pl-1">Журнал сообщений</button>
      <button className="h-5 w-[107px] border border-t-0 border-[#2c4454] bg-[#8ba2b1]">Транскодирование</button>
      <button className="h-[22px] px-1">Устройства воспроизведения (DMR)</button>
    </nav>
  </section>
);

const StatusBar = () => (
  <footer className="flex h-5 shrink-0 gap-[2px] px-px pb-px">
    <div className={`${statusCell} w-[259px]`} />
    <div className={`${statusCell} w-[22px]`}><Puzzle /></div>
    <div className={`${statusCell} w-[22px]`}><ColorWheel /></div>
    <div className="flex">
      <Swatches first="border border-[#a9c0ce] bg-[#8199a8]" />
      <Swatches first="bg-white" />
      <Swatches first="bg-[#bfd7e5]" />
    </div>
    <div className={`${statusCell} w-[102px]`}>55988</div>
    <div className={`${statusCell} w-[102px]`}>0</div>
    <div className={`${statusCell} w-[102px]`}>0</div>
    <div className={`${statusCell} w-[42px] gap-1`}>
      <UserDisk />
      <span className="size-[13px] border border-[#4d697b] bg-white" />
    </div>
    <div className={`${statusCell} w-8`}>3</div>
    <div className={`${statusCell} w-8`}>0</div>
    <div className={`${statusCell} flex-1`}>В. 2.14 от 25.03.2016</div>
  </footer>
);

export default function App() {
  return (
    <div className={`flex h-screen flex-col overflow-hidden bg-[#708897] text-[11px] leading-[15px] text-black ${tahoma}`}>
      <Defs />
      <TitleBar />
      <ToolBar />
      <main className="mx-[2px] mt-[2px] flex min-h-0 flex-1 gap-1">
        <FoldersPanel />
        <FilesPanel />
      </main>
      <JobsPanel />
      <StatusBar />
    </div>
  );
}
